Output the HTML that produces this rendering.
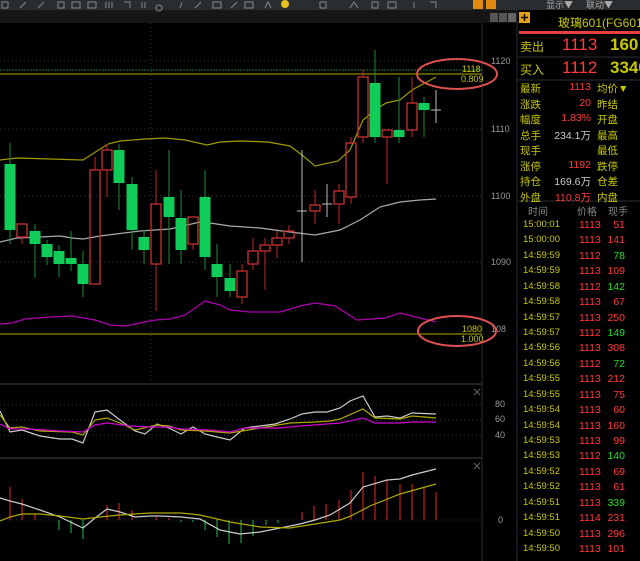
<!DOCTYPE html>
<html><head><meta charset="utf-8"><style>
*{margin:0;padding:0}
body{width:640px;height:561px;background:#000;overflow:hidden;position:relative;font-family:"Liberation Sans","Noto Sans CJK SC",sans-serif}
.a{position:absolute;white-space:nowrap}
.y{color:#c8c800}.r{color:#ff3b3b}.g{color:#22dd22}.w{color:#ccc}
</style></head><body>
<svg width="640" height="561" style="position:absolute;left:0;top:0" font-family="Liberation Sans, sans-serif">
<rect x="0" y="0" width="640" height="10" fill="#2a2d30"/>
<rect x="0" y="10" width="517" height="13" fill="#161616"/>
<g stroke="#888" stroke-width="1" fill="none">
<path d="M2 2h6v6h-6zM20 8l6-6M38 8l6-6M58 2h6v6h-6zM72 2h8v6h-8zM88 2h8v6h-8zM106 2v6M109 2v6M112 2v6M124 2h6v6M142 2v6M145 2v6M159 5a3 3 0 1 0 .1 0M182 2l-2 6M195 8l6-6M213 2h8v6h-8zM231 8l6-6M245 2h8v6h-8zM265 8l3-6l3 6M320 2h6v6h-6zM350 8l4-6l4 6M372 2h6v6h-6zM388 2h8v6h-8zM414 2v6M430 2h6v6"/>
</g>
<circle cx="285" cy="4" r="4" fill="#e8c020"/>
<rect x="473" y="0" width="10" height="9" fill="#e08a10"/><rect x="486" y="0" width="10" height="9" fill="#e08a10"/>
<text x="546" y="8" font-size="9" fill="#aaa" font-family="Noto Sans CJK SC">显示▼</text>
<text x="586" y="8" font-size="9" fill="#aaa" font-family="Noto Sans CJK SC">联动▼</text>
<rect x="490" y="13" width="8" height="9" fill="#555"/><rect x="499" y="13" width="8" height="9" fill="#555"/><rect x="508" y="13" width="8" height="9" fill="#666"/>
<g stroke="#333" stroke-dasharray="1 3">
<path d="M0 61H482M0 129H482M0 196H482M0 262H482M0 405H482M0 420H482M0 435H482M0 520H482M151 23V383"/>
</g>
<path d="M482 23V561M517 10V561" stroke="#2a2e33"/>
<path d="M0 384H482M0 458H482" stroke="#2a2e33" stroke-width="1.5"/>
<g font-size="9" fill="#999">
<text x="491" y="64">1120</text><text x="491" y="132">1110</text><text x="491" y="199">1100</text><text x="491" y="265">1090</text><text x="491" y="332">108</text>
<text x="495" y="407">80</text><text x="495" y="422">60</text><text x="495" y="438">40</text><text x="498" y="523">0</text>
</g>
<path d="M0 70H482" stroke="#1a7a40" stroke-dasharray="2 1"/>
<path d="M0 74H482" stroke="#b0a800"/>
<path d="M0 334H482" stroke="#b0a800"/>
<g font-size="9" fill="#c8c800"><text x="462" y="72">1118</text><text x="461" y="82">0.809</text><text x="462" y="332">1080</text><text x="461" y="342">1.000</text></g>
<g fill="none" stroke-width="1.2">
<polyline stroke="#a09a00" points="0,160 17,158 83,160 108,144 120,141 145,139 165,138 185,140 207,145 220,142 240,141 268,142 290,146 302,155 315,166 338,161 350,150 363,120 375,110 386,103 400,100 412,90 436,77"/>
<polyline stroke="#aaa" points="0,242 17,238 40,237 60,236 72,238 83,239 100,236 140,231 170,229 200,222 210,223 230,226 245,227 260,228 290,232 315,235 340,230 360,220 380,207 400,202 420,200 436,199"/>
<polyline stroke="#b000b0" points="0,324 12,323 25,319 50,317 72,316 95,320 110,325 125,326 140,323 155,320 170,319 185,315 205,301 220,305 230,310 250,312 280,312 300,306 315,303 335,306 357,320 385,318 400,313 420,318 436,322"/>
</g>
<g id="c"></g>
<g fill="none" stroke-width="1.2">
<polyline stroke="#ccc" points="0,411 10,432 22,430 40,436 60,439 72,439 83,443 95,412 107,410 120,420 135,431 145,434 157,424 169,428 181,434 193,427 205,434 217,437 230,440 245,428 260,426 275,424 290,419 302,414 315,412 327,412 340,408 350,401 363,396 375,417 387,416 400,418 412,413 436,414"/>
<polyline stroke="#b0a800" points="0,415 10,428 22,427 40,431 72,432 83,435 95,420 107,418 120,423 135,430 157,425 169,426 181,430 205,431 230,433 260,428 290,423 315,422 330,421 340,419 363,409 375,418 400,419 412,416 436,418"/>
<polyline stroke="#d000d0" points="0,424 10,429 30,429 60,431 83,432 95,425 107,423 130,426 150,427 169,427 181,429 210,430 230,432 245,428 280,428 300,426 340,423 363,418 375,423 400,423 412,422 436,422"/>
</g>
<path d="M474 389l6 6M480 389l-6 6M474 463l6 6M480 463l-6 6" stroke="#666"/>
<g stroke-width="1.2">
<path stroke="#c02020" d="M10 520V487M22 520V499M35 520V513M107 520V505M119 520V503M132 520V510M156 520V517M169 520V518M302 520V512M314 520V506M326 520V504M339 520V500M351 520V490M363 520V472M375 520V476M387 520V480M400 520V484M412 520V484M424 520V487M436 520V492"/>
<path stroke="#18a040" d="M59 520V530M71 520V533M83 520V539M181 520V522M193 520V522M205 520V530M217 520V537M229 520V544M241 520V543M253 520V536M266 520V525M278 520V523"/>
</g>
<g fill="none" stroke-width="1.2">
<polyline stroke="#ccc" points="0,498 10,501 22,504 40,510 60,517 83,528 95,518 107,509 120,512 135,517 150,516 160,516 181,517 200,519 220,530 240,534 260,532 280,528 300,524 315,520 330,515 350,503 363,487 387,480 400,479 412,475 436,469"/>
<polyline stroke="#b0a800" points="0,521 10,517 22,514 40,514 60,516 83,519 100,517 120,515 150,513 181,513 200,515 230,522 260,527 290,528 315,524 340,520 351,516 370,506 400,494 436,484"/>
</g>
<ellipse cx="457" cy="74" rx="40" ry="15" fill="none" stroke="#e05050" stroke-width="2"/>
<ellipse cx="457" cy="331" rx="39" ry="15" fill="none" stroke="#e05050" stroke-width="2"/>
<rect x="519" y="12" width="11" height="11" fill="#e8a010"/><path d="M521 17.5h7M524.5 14v7" stroke="#000" stroke-width="1.5"/>
<rect x="519" y="31" width="121" height="3" fill="#e84040"/>
<path d="M518 57H640M518 80H640M518 201H640" stroke="#2a2e33"/>
</svg>
<script>
var d=[["g",10,164,230,143,244],["r",22,224,237,224,244],["g",35,231,244,224,278],["g",47,244,257,240,265],["g",59,251,264,245,277],["g",71,258,264,231,271],["g",83,264,284,251,297],["r",95,170,284,157,284],["r",107,150,170,144,197],["g",119,150,183,144,210],["g",132,184,230,177,250],["g",144,237,250,230,264],["r",156,204,264,170,311],["g",169,197,217,150,264],["g",181,218,250,190,264],["r",193,217,244,217,250],["g",205,197,257,170,270],["g",217,264,277,244,297],["g",230,278,291,264,297],["r",242,271,297,264,304],["r",253,251,264,238,270],["r",265,245,251,238,290],["r",277,238,245,231,258],["r",289,231,238,225,244],["w",302,211,211,150,262],["r",315,205,211,190,224],["w",327,204,204,184,217],["r",339,191,204,184,224],["r",351,143,197,137,204],["r",363,77,137,70,143],["g",375,83,137,50,143],["r",387,130,137,130,184],["g",399,130,137,77,143],["r",412,103,130,77,137],["g",424,103,110,97,137],["w",436,110,110,90,123]];
var s="";d.forEach(function(c){var t=c[0],x=c[1];
if(t=="g"){s+='<path d="M'+x+' '+c[4]+'V'+c[5]+'" stroke="#1a8a3a"/><rect x="'+(x-5.5)+'" y="'+c[2]+'" width="11" height="'+(c[3]-c[2])+'" fill="#10cc58"/>';}
else if(t=="r"){s+='<path d="M'+x+' '+c[4]+'V'+c[2]+'M'+x+' '+c[3]+'V'+c[5]+'" stroke="#c02828"/><rect x="'+(x-5)+'" y="'+c[2]+'" width="10" height="'+Math.max(c[3]-c[2],1)+'" fill="none" stroke="#c83030" stroke-width="1.3"/>';}
else{s+='<path d="M'+x+' '+c[4]+'V'+c[5]+'M'+(x-5)+' '+c[2]+'H'+(x+5)+'" stroke="#bbb"/>';}});
document.getElementById("c").innerHTML=s;
</script>
<div class="a y" style="left:558px;top:14px;font-size:12px">玻璃601(FG601)</div>
<div class="a y" style="left:520px;top:38px;font-size:12px">卖出</div>
<div class="a r" style="left:562px;top:35px;font-size:17px">1113</div>
<div class="a y" style="left:610px;top:35px;font-size:17px;font-weight:bold">160</div>
<div class="a y" style="left:520px;top:61px;font-size:12px">买入</div>
<div class="a r" style="left:562px;top:58px;font-size:17px">1112</div>
<div class="a y" style="left:610px;top:58px;font-size:17px;font-weight:bold">3340</div>
<div id="st"></div>
<div class="a w" style="left:528px;top:203px;font-size:10px;color:#888">时间</div>
<div class="a w" style="left:577px;top:203px;font-size:10px;color:#888">价格</div>
<div class="a w" style="left:608px;top:203px;font-size:10px;color:#888">现手</div>
<div id="tk"></div>
<script>
var st=[["最新","1113","r","均价▼"],["涨跌","20","r","昨结"],["幅度","1.83%","r","开盘"],["总手","234.1万","w","最高"],["现手","","w","最低"],["涨停","1192","r","跌停"],["持仓","169.6万","w","仓差"],["外盘","110.8万","r","内盘"]];
var h="";st.forEach(function(r,i){var y=81+i*15.5;
h+='<div class="a y" style="left:520px;top:'+y+'px;font-size:10.5px">'+r[0]+'</div><div class="a '+r[2]+'" style="right:49px;top:'+y+'px;font-size:10.5px">'+r[1]+'</div><div class="a y" style="left:597px;top:'+y+'px;font-size:10.5px">'+r[3]+'</div>';});
document.getElementById("st").innerHTML=h;
var tk=[["15:00:01","1113",51,"r"],["15:00:00","1113",141,"r"],["14:59:59","1112",78,"g"],["14:59:59","1113",109,"r"],["14:59:58","1112",142,"g"],["14:59:58","1113",67,"r"],["14:59:57","1113",250,"r"],["14:59:57","1112",149,"g"],["14:59:56","1113",308,"r"],["14:59:56","1112",72,"g"],["14:59:55","1113",212,"r"],["14:59:55","1113",75,"r"],["14:59:54","1113",60,"r"],["14:59:54","1113",160,"r"],["14:59:53","1113",99,"r"],["14:59:53","1112",140,"g"],["14:59:52","1113",69,"r"],["14:59:52","1113",61,"r"],["14:59:51","1113",339,"g"],["14:59:51","1114",231,"r"],["14:59:50","1113",296,"r"],["14:59:50","1113",101,"r"]];
h="";tk.forEach(function(r,i){var y=219+i*15.43;
h+='<div class="a y" style="left:523px;top:'+y+'px;font-size:9.5px">'+r[0]+'</div><div class="a r" style="left:579px;top:'+y+'px;font-size:10.5px">'+r[1]+'</div><div class="a '+r[3]+'" style="right:15px;top:'+y+'px;font-size:10.5px">'+r[2]+'</div>';});
document.getElementById("tk").innerHTML=h;
</script>
</body></html>
